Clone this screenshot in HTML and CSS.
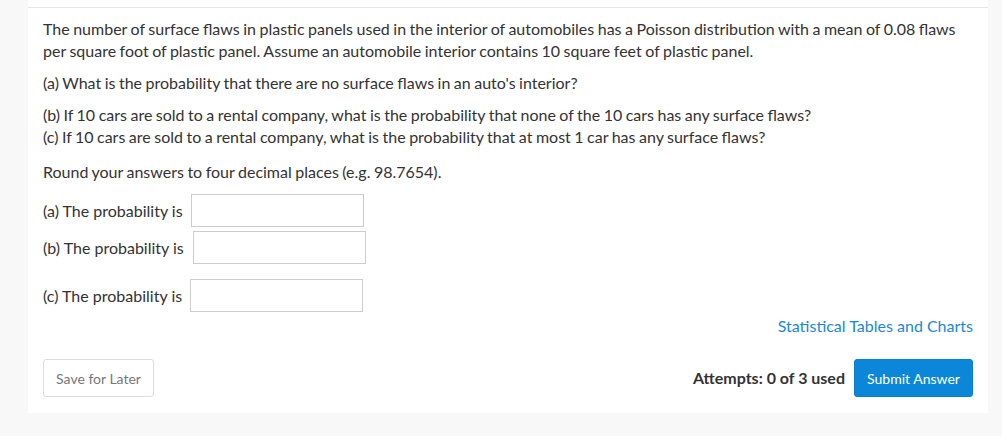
FILE: index.html
```html
<!DOCTYPE html>
<html>
  <head>
    <meta charset="utf-8">
    <title>Question</title>
    <link rel="stylesheet" href="styles.css">
  </head>
  <body>
    <div class="card">
      <div class="question">
        <p>The number of surface flaws in plastic panels used in the interior of automobiles has a Poisson distribution with a mean of 0.08 flaws per square foot of plastic panel. Assume an automobile interior contains 10 square feet of plastic panel.</p>
        <p>(a) What is the probability that there are no surface flaws in an auto's interior?</p>
        <p>(b) If 10 cars are sold to a rental company, what is the probability that none of the 10 cars has any surface flaws?<br>(c) If 10 cars are sold to a rental company, what is the probability that at most 1 car has any surface flaws?</p>
        <p class="note">Round your answers to four decimal places (e.g. 98.7654).</p>

        <div class="answer first">
          <label>(a) The probability is</label>
          <input type="text">
        </div>
        <div class="answer tight">
          <label>(b) The probability is</label>
          <input type="text">
        </div>
        <div class="answer">
          <label>(c) The probability is</label>
          <input type="text">
        </div>

        <div class="links">
          <a href="#">Statistical Tables and Charts</a>
        </div>

        <div class="actions">
          <button class="btn save">Save for Later</button>
          <div class="submit-group">
            <span class="attempts">Attempts: 0 of 3 used</span>
            <button class="btn submit">Submit Answer</button>
          </div>
        </div>
      </div>
    </div>
  </body>
</html>
```

FILE: styles.css
```css
body {
  margin:0;
  background-color:#f8f8f8;
  font-family:Lato, "Open Sans", sans-serif;
  color:#333;
}
.card {
  background-color:#fff;
  width:960px;
  margin-left:28px;
  padding-top:7px;
}
.question {
  border-top:1px solid #e6e6e6;
  padding:10px 15px 16px;
  font-size:16px;
  line-height:22px;
}
p {
  margin:0 0 10px;
  word-spacing:-0.6px;
}
.note {
  margin-top:13px;
}
.answer {
  display:flex;
  align-items:center;
  gap:8px;
  margin-top:15px;
}
.answer.first {
  margin-top:11px;
}
.answer.tight {
  margin-top:4px;
}
.answer.tight input {
  margin-left:1px;
}
.answer input {
  width:173px;
  height:33px;
  box-sizing:border-box;
  border:1px solid #ccc;
  border-radius:0;
  padding:4px 6px;
  font:inherit;
}
.links {
  text-align:right;
  margin-top:3px;
}
.links a {
  color:#1a88d6;
  text-decoration:none;
}
.actions {
  display:flex;
  justify-content:space-between;
  align-items:center;
  margin-top:22px;
}
.submit-group {
  display:flex;
  align-items:center;
  gap:9px;
}
.attempts {
  font-weight:bold;
  color:#333;
}
.btn {
  font-family:Lato, "Open Sans", sans-serif;
  font-size:14px;
  height:38px;
  padding:0 12px;
  border-radius:3px;
  cursor:pointer;
}
.save {
  background-color:#fff;
  border:1px solid #ddd;
  color:#777;
  width:111px;
}
.submit {
  background-color:#0b87da;
  border:1px solid #0a7fcf;
  color:#fff;
  width:119px;
}
```
